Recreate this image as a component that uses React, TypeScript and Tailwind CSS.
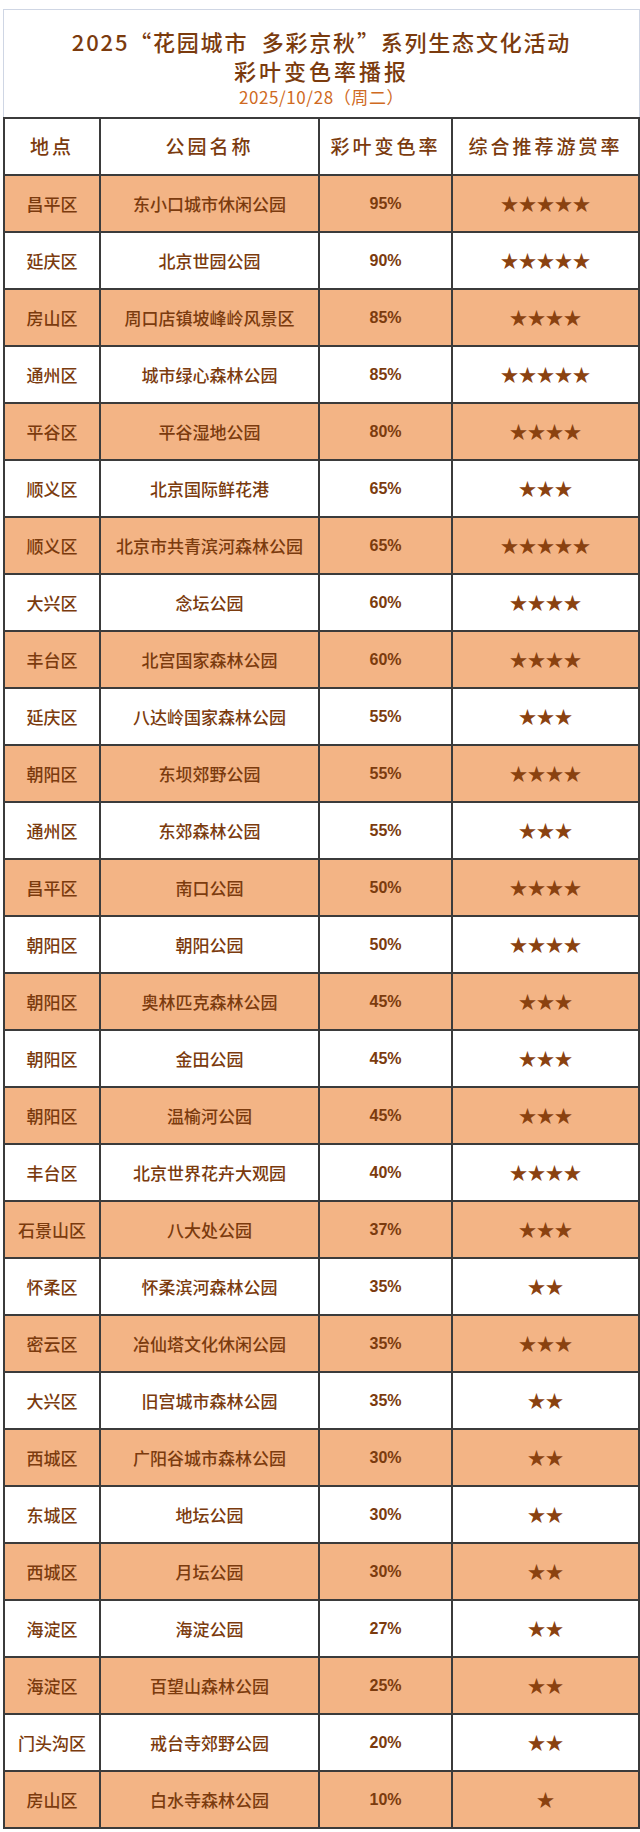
import React from "react";

type Row = [string, string, string, number];

const rows: Row[] = [
  ["昌平区", "东小口城市休闲公园", "95%", 5],
  ["延庆区", "北京世园公园", "90%", 5],
  ["房山区", "周口店镇坡峰岭风景区", "85%", 4],
  ["通州区", "城市绿心森林公园", "85%", 5],
  ["平谷区", "平谷湿地公园", "80%", 4],
  ["顺义区", "北京国际鲜花港", "65%", 3],
  ["顺义区", "北京市共青滨河森林公园", "65%", 5],
  ["大兴区", "念坛公园", "60%", 4],
  ["丰台区", "北宫国家森林公园", "60%", 4],
  ["延庆区", "八达岭国家森林公园", "55%", 3],
  ["朝阳区", "东坝郊野公园", "55%", 4],
  ["通州区", "东郊森林公园", "55%", 3],
  ["昌平区", "南口公园", "50%", 4],
  ["朝阳区", "朝阳公园", "50%", 4],
  ["朝阳区", "奥林匹克森林公园", "45%", 3],
  ["朝阳区", "金田公园", "45%", 3],
  ["朝阳区", "温榆河公园", "45%", 3],
  ["丰台区", "北京世界花卉大观园", "40%", 4],
  ["石景山区", "八大处公园", "37%", 3],
  ["怀柔区", "怀柔滨河森林公园", "35%", 2],
  ["密云区", "冶仙塔文化休闲公园", "35%", 3],
  ["大兴区", "旧宫城市森林公园", "35%", 2],
  ["西城区", "广阳谷城市森林公园", "30%", 2],
  ["东城区", "地坛公园", "30%", 2],
  ["西城区", "月坛公园", "30%", 2],
  ["海淀区", "海淀公园", "27%", 2],
  ["海淀区", "百望山森林公园", "25%", 2],
  ["门头沟区", "戒台寺郊野公园", "20%", 2],
  ["房山区", "白水寺森林公园", "10%", 1],
];

const cjk = "font-['Noto_Sans_CJK_SC','Noto_Sans',sans-serif]";
const cols = "grid grid-cols-[96px_219px_133px_1fr]";

export default function App() {
  return (
    <div className={`w-[640px] bg-white pt-[9px] pb-[4px] ${cjk} text-[#7b3b0e]`}>
      <div className="ml-[3px] w-[637px] h-[108px] border border-b-0 border-[#cfd6e4] flex flex-col items-center pt-[16px]">
        <div className="text-[22px] leading-[30px] font-medium tracking-[1.8px]">
          2025“花园城市&nbsp;&nbsp;多彩京秋”系列生态文化活动
        </div>
        <div className="text-[22px] leading-[29px] font-medium tracking-[3px]">彩叶变色率播报</div>
        <div className="text-[17px] leading-[23px] text-[#cf6a22] tracking-[0.6px]">2025/10/28（周二）</div>
      </div>

      <div className="ml-[3px] w-[637px] border-x-2 border-t-2 border-[#3b3b3b]">
        <div className={`${cols} h-[57px] border-b-2 border-[#3b3b3b] text-[19px] font-medium tracking-[3px]`}>
          <div className="flex items-center justify-center border-r-2 border-[#3b3b3b]">地点</div>
          <div className="flex items-center justify-center border-r-2 border-[#3b3b3b]">公园名称</div>
          <div className="flex items-center justify-center border-r-2 border-[#3b3b3b]">彩叶变色率</div>
          <div className="flex items-center justify-center">综合推荐游赏率</div>
        </div>
        {rows.map(([area, park, rate, stars], i) => (
          <div
            key={i}
            className={`${cols} h-[57px] border-b-2 border-[#3b3b3b] text-[17px] font-medium ${
              i % 2 === 0 ? "bg-[#f3b485]" : "bg-white"
            }`}
          >
            <div className="flex items-center justify-center border-r-2 border-[#3b3b3b]">{area}</div>
            <div className="flex items-center justify-center border-r-2 border-[#3b3b3b]">{park}</div>
            <div className="flex items-center justify-center border-r-2 border-[#3b3b3b] font-['Liberation_Sans_Narrow','Liberation_Sans',sans-serif] text-[16px] font-bold">
              {rate}
            </div>
            <div className="flex items-center justify-center text-[18px] text-[#8a4210]">
              {"★".repeat(stars)}
            </div>
          </div>
        ))}
      </div>
    </div>
  );
}
